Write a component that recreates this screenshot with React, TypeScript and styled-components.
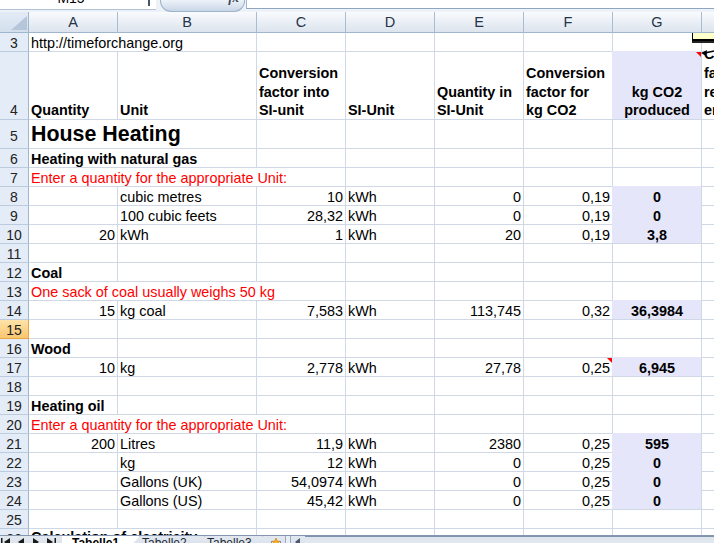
import styled, { createGlobalStyle, css } from 'styled-components'

const COLUMNS = '29px 89px 139px 89px 89px 89px 89px 89px 89px'
const GRID = '#d0d7e5'
const SHADE = '#e6e6fa'
const HEAD_LINE = '#9eb6ce'

const GlobalStyle = createGlobalStyle`
	* { box-sizing: border-box; }
	html, body { margin: 0; padding: 0; background: #fff; }
	body { font-family: 'Liberation Sans', Arial, sans-serif; color: #000; }
`

const Window = styled.div`
	width: 714px;
	height: 543px;
	overflow: hidden;
	display: flex;
	flex-direction: column;
	background: #fff;
`

/* formula bar (only its lower edge is visible) */
const FormulaBar = styled.div`
	flex-shrink: 0;
	height: 12px;
	display: flex;
	align-items: flex-start;
	background: #edf2f8;
`
const NameBox = styled.div`
	width: 142px;
	height: 10px;
	background: #fff;
	border-bottom: 1px solid #b1c2d7;
	display: flex;
	justify-content: center;
	overflow: hidden;
`
const NameText = styled.div`
	height: 5px;
	display: flex;
	align-items: flex-end;
	overflow: hidden;
	font-size: 14px;
	line-height: 14px;
`
const DropButton = styled.div`
	width: 14px;
	height: 10px;
	background: #fff;
	border-bottom: 1px solid #b1c2d7;
	display: flex;
	justify-content: center;
`
const DropMark = styled.span`
	width: 2px;
	height: 6px;
	background: #44546a;
`
const FxButton = styled.div`
	margin-left: 4px;
	width: 85px;
	height: 12px;
	border: 1px solid #9fb3cb;
	border-top: none;
	border-radius: 0 0 11px 11px;
	background: linear-gradient(#eef3f9, #c9d6e7);
	display: flex;
	justify-content: flex-end;
	align-items: flex-end;
	padding-right: 5px;
	overflow: hidden;
`
const FxLabel = styled.span`
	font-family: 'Liberation Serif', serif;
	font-style: italic;
	font-weight: bold;
	font-size: 13px;
	line-height: 13px;
	margin-bottom: 7px;
	color: #3b4656;
`
const FormulaInput = styled.div`
	flex: 1;
	height: 9px;
	margin-left: 1px;
	background: #fff;
	border-left: 1px solid #a7b9cf;
	border-bottom: 1px solid #8fa5c0;
`

/* sheet grid */
const Sheet = styled.div`
	position: relative;
	flex-shrink: 0;
	height: 523px;
	overflow: hidden;
	display: flex;
	flex-direction: column;
`
const Row = styled.div<{ $h: number }>`
	flex-shrink: 0;
	display: grid;
	grid-template-columns: ${COLUMNS};
	height: ${p => p.$h}px;
`
const Corner = styled.div`
	position: relative;
	background: linear-gradient(#e3ebf6, #d3dfee);
	border-right: 1px solid ${HEAD_LINE};
	border-bottom: 1px solid ${HEAD_LINE};
	&::after {
		content: '';
		position: absolute;
		right: 1px;
		bottom: 2px;
		width: 16px;
		height: 14px;
		background: #b5c6db;
		clip-path: polygon(100% 0, 100% 100%, 0 100%);
	}
`
const ColHead = styled.div`
	display: flex;
	align-items: center;
	justify-content: center;
	background: linear-gradient(#f9fbfd, #e9eef5 55%, #dde4ed);
	border-right: 1px solid #aabcd1;
	border-bottom: 1px solid ${HEAD_LINE};
	font-size: 14.5px;
	color: #26344a;
`
const RowHead = styled.div<{ $active?: boolean; $lift?: number }>`
	display: flex;
	align-items: flex-end;
	justify-content: center;
	padding-bottom: ${p => p.$lift ?? 0}px;
	background: ${p => (p.$active ? 'linear-gradient(#fde3aa, #f8c66e)' : '#e4ecf7')};
	border-right: 1px solid ${p => (p.$active ? '#e9a444' : HEAD_LINE)};
	border-bottom: 1px solid ${p => (p.$active ? '#e9a444' : '#bccbde')};
	font-size: 14px;
	line-height: 16px;
	color: #222;
`

type Align = 'left' | 'right' | 'center'
type Tone = 'plain' | 'bold' | 'red' | 'big'

const Cell = styled.div<{
	$align?: Align
	$tone?: Tone
	$span?: number
	$fill?: boolean
	$note?: boolean
	$top?: boolean
}>`
	position: relative;
	grid-column: span ${p => p.$span ?? 1};
	display: flex;
	align-items: ${p => (p.$top ? 'flex-start' : 'flex-end')};
	justify-content: ${p =>
		p.$align === 'right' ? 'flex-end' : p.$align === 'center' ? 'center' : 'flex-start'};
	min-width: 0;
	padding: 0 2px;
	border-right: 1px solid ${GRID};
	border-bottom: 1px solid ${GRID};
	font-size: 14.4px;
	line-height: 16px;
	white-space: nowrap;
	overflow: hidden;
	color: ${p => (p.$tone === 'red' ? '#ff0000' : '#000')};
	font-weight: ${p => (p.$tone === 'bold' || p.$tone === 'big' ? 'bold' : 'normal')};
	${p =>
		p.$tone === 'big' &&
		css`
			font-size: 21.4px;
			line-height: 24px;
			padding-bottom: 2px;
		`}
	${p =>
		p.$fill &&
		css`
			background: ${SHADE};
			box-shadow: -1px -1px 0 ${SHADE};
		`}
	${p =>
		p.$note &&
		css`
			&::after {
				content: '';
				position: absolute;
				top: 0;
				right: 0;
				border-style: solid;
				border-width: 0 5px 5px 0;
				border-color: transparent #ff0000 transparent transparent;
			}
		`}
`
const HeadLines = styled.div<{ $center?: boolean }>`
	display: flex;
	flex-direction: column;
	align-items: ${p => (p.$center ? 'center' : 'flex-start')};
	line-height: 18.7px;
	margin-bottom: -1px;
`

/* comment popup pinned to G4 */
const CommentBox = styled.div`
	position: absolute;
	left: 692px;
	top: 21px;
	width: 30px;
	height: 8px;
	background: #ffffcc;
	border-left: 1px solid #000;
	border-bottom: 2px solid #000;
	box-shadow: 0 2px 0 #222;
`
const CommentArrow = styled.svg`
	position: absolute;
	left: 699px;
	top: 37px;
`

/* sheet tabs + scrollbar */
const TabBar = styled.div`
	flex-shrink: 0;
	height: 24px;
	display: flex;
	border-top: 1px solid #8597b0;
	background: linear-gradient(#e2e8f0, #cfd9e5);
`
const NavButtons = styled.div`
	width: 62px;
	display: flex;
	gap: 5px;
	padding-top: 1px;
`
const SheetTab = styled.div<{ $active?: boolean; $w: number; $pad: number }>`
	position: relative;
	width: ${p => p.$w}px;
	padding-left: ${p => p.$pad}px;
	font-size: 12px;
	line-height: 14px;
	font-weight: ${p => (p.$active ? 'bold' : 'normal')};
	color: ${p => (p.$active ? '#000' : '#1d2633')};
	background: ${p => (p.$active ? '#fff' : 'transparent')};
	clip-path: polygon(0 0, 100% 0, calc(100% - 22px) 100%, 0 100%);
	&::after {
		content: '';
		position: absolute;
		right: 0;
		top: 0;
		width: 1px;
		height: 100%;
		background: #6f829c;
		transform-origin: top;
		transform: skewX(45deg);
	}
`
const InsertTab = styled.div`
	width: 22px;
	padding-left: 7px;
`
const Splitter = styled.div`
	width: 6px;
	border-left: 1px solid #9aabc1;
	border-right: 1px solid #9aabc1;
	background: #e9eef4;
`
const ScrollLeft = styled.div`
	width: 14px;
	display: flex;
	justify-content: center;
	padding-top: 2px;
`
const ScrollTrack = styled.div`
	flex: 1;
	border-top: 1px solid #7f93ae;
	background: linear-gradient(#dde4ec, #eef2f6);
`

const BLANK = (count: number, from: number) =>
	Array.from({ length: count }, (_, i) => <Cell key={`b${from + i}`} />)

type RowSpec =
	| { n: number; kind: 'empty' }
	| { n: number; kind: 'text'; text: string; span: number; tone: Tone; top?: boolean }
	| {
			n: number
			kind: 'data'
			a?: string
			b: string
			c: string
			e: string
			f: string
			g: string
			noteF?: boolean
	  }

const ROWS: RowSpec[] = [
	{ n: 6, kind: 'text', text: 'Heating with natural gas', span: 2, tone: 'bold' },
	{ n: 7, kind: 'text', text: 'Enter a quantity for the appropriate Unit:', span: 3, tone: 'red' },
	{ n: 8, kind: 'data', b: 'cubic metres', c: '10', e: '0', f: '0,19', g: '0' },
	{ n: 9, kind: 'data', b: '100 cubic feets', c: '28,32', e: '0', f: '0,19', g: '0' },
	{ n: 10, kind: 'data', a: '20', b: 'kWh', c: '1', e: '20', f: '0,19', g: '3,8' },
	{ n: 11, kind: 'empty' },
	{ n: 12, kind: 'text', text: 'Coal', span: 1, tone: 'bold' },
	{ n: 13, kind: 'text', text: 'One sack of coal usually weighs 50 kg', span: 3, tone: 'red' },
	{ n: 14, kind: 'data', a: '15', b: 'kg coal', c: '7,583', e: '113,745', f: '0,32', g: '36,3984' },
	{ n: 15, kind: 'empty' },
	{ n: 16, kind: 'text', text: 'Wood', span: 1, tone: 'bold' },
	{ n: 17, kind: 'data', a: '10', b: 'kg', c: '2,778', e: '27,78', f: '0,25', g: '6,945', noteF: true },
	{ n: 18, kind: 'empty' },
	{ n: 19, kind: 'text', text: 'Heating oil', span: 1, tone: 'bold' },
	{ n: 20, kind: 'text', text: 'Enter a quantity for the appropriate Unit:', span: 3, tone: 'red' },
	{ n: 21, kind: 'data', a: '200', b: 'Litres', c: '11,9', e: '2380', f: '0,25', g: '595' },
	{ n: 22, kind: 'data', b: 'kg', c: '12', e: '0', f: '0,25', g: '0' },
	{ n: 23, kind: 'data', b: 'Gallons (UK)', c: '54,0974', e: '0', f: '0,25', g: '0' },
	{ n: 24, kind: 'data', b: 'Gallons (US)', c: '45,42', e: '0', f: '0,25', g: '0' },
	{ n: 25, kind: 'empty' },
	{ n: 26, kind: 'text', text: 'Calculation of electricity', span: 2, tone: 'bold', top: true },
]

const ACTIVE_ROW = 15

const SheetRow = ({ spec }: { spec: RowSpec }) => {
	const head = <RowHead $active={spec.n === ACTIVE_ROW}>{spec.n}</RowHead>
	if (spec.kind === 'empty') {
		return (
			<Row $h={19}>
				{head}
				{BLANK(8, 0)}
			</Row>
		)
	}
	if (spec.kind === 'text') {
		return (
			<Row $h={19}>
				{head}
				<Cell $span={spec.span} $tone={spec.tone} $top={spec.top}>
					{spec.text}
				</Cell>
				{BLANK(8 - spec.span, spec.span)}
			</Row>
		)
	}
	return (
		<Row $h={19}>
			{head}
			<Cell $align="right">{spec.a}</Cell>
			<Cell>{spec.b}</Cell>
			<Cell $align="right">{spec.c}</Cell>
			<Cell>kWh</Cell>
			<Cell $align="right">{spec.e}</Cell>
			<Cell $align="right" $note={spec.noteF}>
				{spec.f}
			</Cell>
			<Cell $align="center" $tone="bold" $fill>
				{spec.g}
			</Cell>
			<Cell />
		</Row>
	)
}

const Lines = ({ lines, center }: { lines: string[]; center?: boolean }) => (
	<HeadLines $center={center}>
		{lines.map(l => (
			<span key={l}>{l}</span>
		))}
	</HeadLines>
)

const NavIcon = ({ dir, bar }: { dir: 'left' | 'right'; bar?: boolean }) => (
	<svg width={bar ? 12 : 9} height="10" viewBox={bar ? '0 0 12 10' : '0 0 9 10'}>
		{dir === 'left' ? (
			<>
				{bar && <rect x="1" y="1" width="1.5" height="8" fill="#1a1a1a" />}
				<polygon points={bar ? '4,5 10,1 10,9' : '1,5 7,1 7,9'} fill="#1a1a1a" />
			</>
		) : (
			<>
				<polygon points="2,1 8,5 2,9" fill="#1a1a1a" />
				{bar && <rect x="9.5" y="1" width="1.5" height="8" fill="#1a1a1a" />}
			</>
		)}
	</svg>
)

const App = () => {
	return (
		<Window>
			<GlobalStyle />
			<FormulaBar>
				<NameBox>
					<NameText>M15</NameText>
				</NameBox>
				<DropButton>
					<DropMark />
				</DropButton>
				<FxButton>
					<FxLabel>fx</FxLabel>
				</FxButton>
				<FormulaInput />
			</FormulaBar>

			<Sheet>
				<Row $h={21}>
					<Corner />
					{['A', 'B', 'C', 'D', 'E', 'F', 'G', 'H'].map(c => (
						<ColHead key={c}>{c}</ColHead>
					))}
				</Row>

				<Row $h={19}>
					<RowHead>3</RowHead>
					<Cell $span={2}>http://timeforchange.org</Cell>
					{BLANK(6, 2)}
				</Row>

				<Row $h={68}>
					<RowHead $lift={1}>4</RowHead>
					<Cell $tone="bold">
						<Lines lines={['Quantity']} />
					</Cell>
					<Cell $tone="bold">
						<Lines lines={['Unit']} />
					</Cell>
					<Cell $tone="bold">
						<Lines lines={['Conversion', 'factor into', 'SI-unit']} />
					</Cell>
					<Cell $tone="bold">
						<Lines lines={['SI-Unit']} />
					</Cell>
					<Cell $tone="bold">
						<Lines lines={['Quantity in', 'SI-Unit']} />
					</Cell>
					<Cell $tone="bold">
						<Lines lines={['Conversion', 'factor for', 'kg CO2']} />
					</Cell>
					<Cell $tone="bold" $align="center" $fill $note>
						<Lines lines={['kg CO2', 'produced']} center />
					</Cell>
					<Cell $tone="bold">
						<Lines lines={['Conversion', 'factor for', 'related', 'emissions']} />
					</Cell>
				</Row>

				<Row $h={29}>
					<RowHead $lift={4}>5</RowHead>
					<Cell $span={2} $tone="big">
						House Heating
					</Cell>
					{BLANK(6, 2)}
				</Row>

				{ROWS.map(spec => (
					<SheetRow key={spec.n} spec={spec} />
				))}

				<CommentBox />
				<CommentArrow width="15" height="9" viewBox="0 0 15 9">
					<polygon points="2,4 8,1 7,7" fill="#000" />
					<line x1="6" y1="4" x2="15" y2="2" stroke="#000" strokeWidth="1.6" />
				</CommentArrow>
			</Sheet>

			<TabBar>
				<NavButtons>
					<NavIcon dir="left" bar />
					<NavIcon dir="left" />
					<NavIcon dir="right" />
					<NavIcon dir="right" bar />
				</NavButtons>
				<SheetTab $active $w={78} $pad={10}>
					Tabelle1
				</SheetTab>
				<SheetTab $w={65} $pad={2}>
					Tabelle2
				</SheetTab>
				<SheetTab $w={58} $pad={2}>
					Tabelle3
				</SheetTab>
				<InsertTab>
					<svg width="12" height="12" viewBox="0 0 12 12">
						<rect x="1.5" y="3.5" width="9" height="8" fill="#fff" stroke="#7d8ea6" />
						<polygon
							points="6,0 7.2,3 10,3.4 7.8,5.2 8.6,8 6,6.4 3.4,8 4.2,5.2 2,3.4 4.8,3"
							fill="#f5b324"
							stroke="#d27b0c"
							strokeWidth="0.6"
						/>
					</svg>
				</InsertTab>
				<Splitter />
				<ScrollLeft>
					<svg width="6" height="8" viewBox="0 0 6 8">
						<polygon points="0,4 5,0 5,8" fill="#4a5870" />
					</svg>
				</ScrollLeft>
				<ScrollTrack />
			</TabBar>
		</Window>
	)
}

export default App
